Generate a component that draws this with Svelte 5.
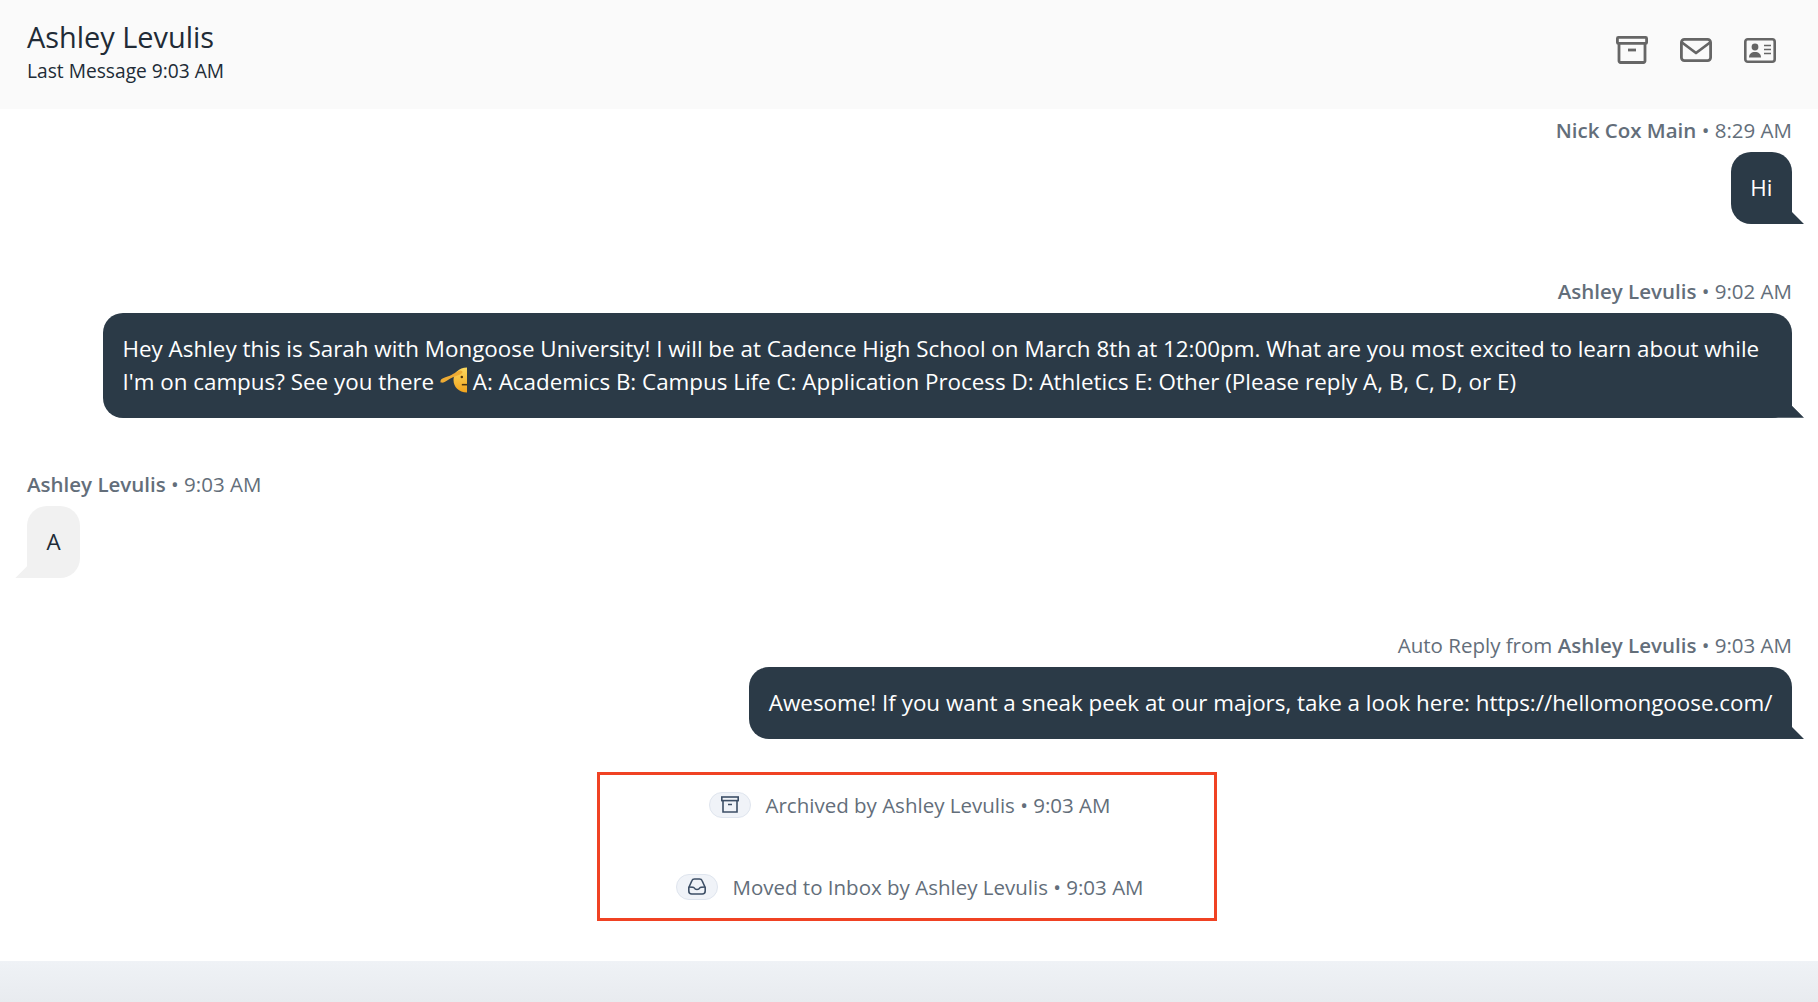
<script>
	const messages = [
		{ side: 'out', from: 'Nick Cox Main', time: '8:29 AM', text: 'Hi' },
		{ side: 'out', from: 'Ashley Levulis', time: '9:02 AM', long: true },
		{ side: 'in', from: 'Ashley Levulis', time: '9:03 AM', text: 'A' },
		{
			side: 'out',
			prefix: 'Auto Reply from ',
			from: 'Ashley Levulis',
			time: '9:03 AM',
			text: 'Awesome! If you want a sneak peek at our majors, take a look here: https://hellomongoose.com/'
		}
	];
</script>

<div class="page">
	<header class="top">
		<div>
			<h1>Ashley Levulis</h1>
			<p>Last Message 9:03 AM</p>
		</div>
		<div class="actions">
			<svg width="32" height="28" viewBox="0 0 32 28" fill="none" stroke="#666" stroke-width="2.8" stroke-linejoin="round">
				<rect x="1.4" y="1.4" width="29.200" height="6" rx="1" />
				<path d="M3 7.400V25a1.500 1.500 0 0 0 1.500 1.500h23a1.500 1.500 0 0 0 1.500-1.500V7.400" />
				<path d="M12 14h8" />
			</svg>
			<svg width="32" height="24" viewBox="0 0 32 24" fill="none" stroke="#666" stroke-width="2.8" stroke-linejoin="round">
				<rect x="1.400" y="1.400" width="29.200" height="21.200" rx="3" />
				<path d="M2 4.500 16 15 30 4.500" />
			</svg>
			<svg width="32" height="25" viewBox="0 0 32 25" fill="none">
				<rect x="1.300" y="1.300" width="29.400" height="22.400" rx="2.500" stroke="#666" stroke-width="2.600" />
				<circle cx="11" cy="9" r="3.400" fill="#666" />
				<path d="M5 19.500c0-3.600 2.400-5.500 6-5.500s6 1.900 6 5.500z" fill="#666" />
				<path d="M20 7.500h7M20 11.500h7M20 15.500h7" stroke="#666" stroke-width="1.600" />
			</svg>
		</div>
	</header>

	<main class="thread">
		{#each messages as m}
			<section class="msg {m.side}">
				<div class="meta">{m.prefix ?? ''}<b>{m.from}</b> • {m.time}</div>
				<div class="bubble">
					{#if m.long}
						Hey Ashley this is Sarah with Mongoose University! I will be at Cadence High School on March 8th at 12:00pm. What are you most excited to learn about while I'm on campus? See you there
						<svg class="emoji" width="27" height="26" viewBox="0 0 26 25">
							<defs>
								<linearGradient id="face" x1="0" y1="0" x2="0" y2="1">
									<stop offset="0" stop-color="#fbd960" />
									<stop offset="1" stop-color="#f1a31c" />
								</linearGradient>
							</defs>
							<path d="M26 .5C18 .5 13 6 13 12.500S18 24.500 26 24.500z" fill="url(#face)" />
							<path d="M.5 13.500C1 11 4 10.500 8 9c4-1.500 8-5 11-5.500 2-.3 3 .8 2.500 2-.5 1.200-3 2-6 3.200-4 1.600-8 3.800-11 5.800-2 1-4.500 .8-4-.5z" fill="#eeab34" />
							<circle cx="21" cy="9.500" r="1.200" fill="#4a3410" />
							<path d="M21 17h5" stroke="#4a3410" stroke-width="1.500" />
						</svg>
						A: Academics B: Campus Life C: Application Process D: Athletics E: Other (Please reply A, B, C, D, or E)
					{:else}
						{m.text}
					{/if}
				</div>
			</section>
		{/each}

		<div class="events">
			<div class="event">
				<span class="pill">
					<svg width="20" height="17" viewBox="0 0 20 17" fill="none" stroke="#3d4f66" stroke-width="1.600">
						<rect x="1.800" y="1" width="16.400" height="3.600" />
						<path d="M3 4.600V16h14V4.600M8 8.500h4" />
					</svg>
				</span>
				<span>Archived by Ashley Levulis • 9:03 AM</span>
			</div>
			<div class="event">
				<span class="pill">
					<svg width="20" height="17" viewBox="0 0 20 17" fill="none" stroke="#3d4f66" stroke-width="1.600" stroke-linejoin="round">
						<path d="M1.800 9.500 5 2.500Q5.500 1 7.500 1h5q2 0 2.500 1.500l3.200 7V13q0 3-3 3H4.800q-3 0-3-3z" />
						<path d="M1.800 9c3 0 5 0 5.500 1 .5 1 1 1.500 2.700 1.500s2.200-.5 2.700-1.500c.5-1 2.500-1 5.500-1" />
					</svg>
				</span>
				<span>Moved to Inbox by Ashley Levulis • 9:03 AM</span>
			</div>
		</div>
	</main>

	<div class="footer"></div>
</div>

<style>
	:global(body) {
		margin: 0;
		background: #fff;
	}

	.page {
		height: 1002px;
		display: flex;
		flex-direction: column;
		overflow: hidden;
		font-family: "Open Sans", sans-serif;
		font-size: 20.500px;
		color: #212b36;
	}

	.top {
		height: 109px;
		box-sizing: border-box;
		flex: none;
		display: flex;
		justify-content: space-between;
		align-items: flex-start;
		padding: 18px 42px 0 27px;
		background: #fafafa;
	}

	h1 {
		margin: 0;
		font-size: 28.900px;
		font-weight: 400;
		line-height: 38px;
	}

	.top p {
		margin: 0;
		font-size: 19.200px;
		line-height: 30px;
	}

	.actions {
		display: flex;
		align-items: center;
		gap: 32px;
		height: 28px;
		padding-top: 18px;
	}

	.thread {
		flex: 1;
		padding: 8px 26px 0 27px;
	}

	.msg {
		display: flex;
		flex-direction: column;
		margin-bottom: 53.670px;
	}

	.msg.out {
		align-items: flex-end;
	}

	.msg.in {
		align-items: flex-start;
	}

	.meta {
		color: #636e7a;
		line-height: 27px;
		margin-bottom: 8px;
	}

	.meta b {
		font-weight: 600;
	}

	.bubble {
		position: relative;
		box-sizing: border-box;
		max-width: 1689px;
		padding: 19px 19.500px 20px;
		font-size: 22.400px;
		line-height: 33px;
		border-radius: 20px;
	}

	.out .bubble {
		background: #2b3a47;
		color: #fff;
	}

	.in .bubble {
		background: #f1f1f1;
		color: #212b36;
	}

	.bubble::after {
		content: "";
		position: absolute;
		bottom: 0;
		width: 32px;
		height: 20px;
	}

	.out .bubble::after {
		right: -12px;
		background: #2b3a47;
		clip-path: polygon(0 0, 20px 0, 20px 8px, 100% 100%, 0 100%);
	}

	.in .bubble::after {
		left: -12px;
		background: #f1f1f1;
		clip-path: polygon(12px 0, 100% 0, 100% 100%, 0 100%, 12px 8px);
	}

	.emoji {
		vertical-align: -3px;
	}

	.events {
		width: 620px;
		height: 149px;
		box-sizing: border-box;
		margin: -21px 0 0 570px;
		border: 3px solid #f04223;
		display: flex;
		flex-direction: column;
		align-items: center;
		justify-content: space-between;
		padding: 16px 0 17px 6px;
	}

	.event {
		display: flex;
		align-items: center;
		gap: 14px;
		color: #636e7a;
		line-height: 28px;
	}

	.pill {
		width: 42px;
		height: 26px;
		border-radius: 13px;
		background: #f0f3f8;
		border: 1px solid #dfe5ee;
		box-sizing: border-box;
		display: flex;
		align-items: center;
		justify-content: center;
	}

	.footer {
		height: 41px;
		flex: none;
		background: linear-gradient(#eff2f6, #e8ebef);
	}
</style>
